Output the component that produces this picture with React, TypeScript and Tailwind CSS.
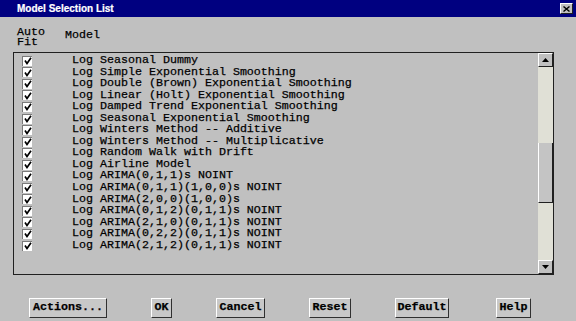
import React from 'react';

const models = [
  'Log Seasonal Dummy',
  'Log Simple Exponential Smoothing',
  'Log Double (Brown) Exponential Smoothing',
  'Log Linear (Holt) Exponential Smoothing',
  'Log Damped Trend Exponential Smoothing',
  'Log Seasonal Exponential Smoothing',
  'Log Winters Method -- Additive',
  'Log Winters Method -- Multiplicative',
  'Log Random Walk with Drift',
  'Log Airline Model',
  'Log ARIMA(0,1,1)s NOINT',
  'Log ARIMA(0,1,1)(1,0,0)s NOINT',
  'Log ARIMA(2,0,0)(1,0,0)s',
  'Log ARIMA(0,1,2)(0,1,1)s NOINT',
  'Log ARIMA(2,1,0)(0,1,1)s NOINT',
  'Log ARIMA(0,2,2)(0,1,1)s NOINT',
  'Log ARIMA(2,1,2)(0,1,1)s NOINT',
];

const buttons = [
  { label: 'Actions...', w: 'w-[78px]' },
  { label: 'OK', w: 'w-[21px]' },
  { label: 'Cancel', w: 'w-[49px]' },
  { label: 'Reset', w: 'w-[42px]' },
  { label: 'Default', w: 'w-[54px]' },
  { label: 'Help', w: 'w-[35px] ml-[3px]' },
];

function CheckBox() {
  return (
    <div className="w-[10px] h-[10px] bg-white border-t border-l border-[#7a7a7a] flex items-center justify-center shrink-0">
      <svg width="8" height="8" viewBox="0 0 8 8">
        <path d="M1 3.5L3 6.5L7 0.8" fill="none" stroke="#000" strokeWidth="1.7" />
      </svg>
    </div>
  );
}

function ArrowButton({ up }: { up?: boolean }) {
  return (
    <div className="h-[14px] w-full bg-[#c0c0c0] border-t border-l border-t-white border-l-white border-b border-r border-b-[#202020] border-r-[#202020] flex items-center justify-center">
      <svg width="7" height="4" viewBox="0 0 7 4">
        {up ? <path d="M0 4H7L3.5 0Z" fill="#000" /> : <path d="M0 0H7L3.5 4Z" fill="#000" />}
      </svg>
    </div>
  );
}

export default function App() {
  return (
    <div className="w-[576px] h-[321px] bg-[#c0c0c0] flex flex-col overflow-hidden font-['Liberation_Mono',monospace] text-[11.67px] text-black [-webkit-text-stroke:0.25px_black]">
      {/* Title bar */}
      <div className="h-[17px] bg-[#000080] flex items-center justify-between pl-[17px] pr-[3px] shrink-0">
        <span className="font-['Liberation_Sans',Arial,sans-serif] font-bold text-[10px] text-white [-webkit-text-stroke:0.2px_white]">
          Model Selection List
        </span>
        <div className="w-[13px] h-[11px] bg-[#c0c0c0] border-t border-l border-t-white border-l-white border-b border-r border-b-[#202020] border-r-[#202020] flex items-center justify-center">
          <svg width="7" height="6" viewBox="0 0 7 6">
            <path d="M0.5 0.5L6.5 5.5M6.5 0.5L0.5 5.5" stroke="#000" strokeWidth="1.4" />
          </svg>
        </div>
      </div>

      {/* Column headers */}
      <div className="h-[35px] flex items-center pl-[17px] pt-[5px] shrink-0">
        <div className="w-[48px] leading-[10.5px]">
          <div>Auto</div>
          <div>Fit</div>
        </div>
        <div className="mb-[3px]">Model</div>
      </div>

      {/* List box */}
      <div className="ml-[13px] w-[541px] h-[223px] border border-[#202020] flex shrink-0">
        <div className="flex-1 pt-[2px]">
          {models.map((m) => (
            <div key={m} className="h-[11.56px] flex items-center">
              <div className="ml-[8px]">
                <CheckBox />
              </div>
              <span className="ml-[40px] leading-[11.56px] whitespace-pre">{m}</span>
            </div>
          ))}
        </div>
        <div className="w-[15px] flex flex-col">
          <ArrowButton up />
          <div className="h-[76px] bg-[#e0e0d6]" />
          <div className="h-[60px] bg-[#c4c4c4] border-l border-l-white border-r border-r-[#202020] border-b border-b-[#202020]" />
          <div className="flex-1 bg-[#e0e0d6]" />
          <ArrowButton />
        </div>
      </div>

      {/* Buttons */}
      <div className="flex gap-[44px] pl-[29px] mt-[23px]">
        {buttons.map((b) => (
          <div
            key={b.label}
            className={`${b.w} h-[20px] bg-[#c8c8c8] border-t border-l border-t-white border-l-white border-b border-r border-b-[#303030] border-r-[#303030] flex items-center justify-center font-bold whitespace-pre`}
          >
            {b.label}
          </div>
        ))}
      </div>
    </div>
  );
}
